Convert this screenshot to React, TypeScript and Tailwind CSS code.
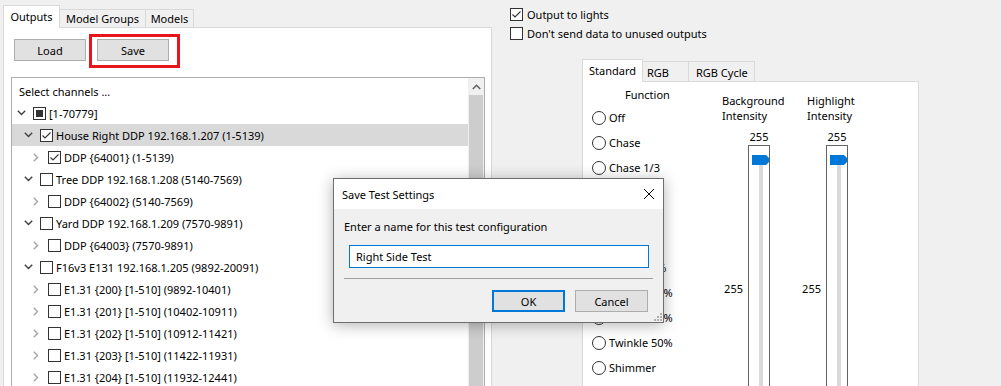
import React from "react";

type CheckState = "none" | "checked" | "partial";

interface TreeRow {
  label: string;
  level: number;
  expanded: boolean;
  state: CheckState;
  selected?: boolean;
}

const treeRows: TreeRow[] = [
  { label: "[1-70779]", level: 0, expanded: true, state: "partial" },
  { label: "House Right DDP 192.168.1.207 (1-5139)", level: 1, expanded: true, state: "checked", selected: true },
  { label: "DDP {64001} (1-5139)", level: 2, expanded: false, state: "checked" },
  { label: "Tree DDP 192.168.1.208 (5140-7569)", level: 1, expanded: true, state: "none" },
  { label: "DDP {64002} (5140-7569)", level: 2, expanded: false, state: "none" },
  { label: "Yard DDP 192.168.1.209 (7570-9891)", level: 1, expanded: true, state: "none" },
  { label: "DDP {64003} (7570-9891)", level: 2, expanded: false, state: "none" },
  { label: "F16v3 E131 192.168.1.205 (9892-20091)", level: 1, expanded: true, state: "none" },
  { label: "E1.31 {200} [1-510] (9892-10401)", level: 2, expanded: false, state: "none" },
  { label: "E1.31 {201} [1-510] (10402-10911)", level: 2, expanded: false, state: "none" },
  { label: "E1.31 {202} [1-510] (10912-11421)", level: 2, expanded: false, state: "none" },
  { label: "E1.31 {203} [1-510] (11422-11931)", level: 2, expanded: false, state: "none" },
  { label: "E1.31 {204} [1-510] (11932-12441)", level: 2, expanded: false, state: "none" },
];

const functions = [
  "Off",
  "Chase",
  "Chase 1/3",
  "Chase 1/4",
  "Chase 1/5",
  "Alternate",
  "Twinkle 5%",
  "Twinkle 10%",
  "Twinkle 25%",
  "Twinkle 50%",
  "Shimmer",
];

const indents = ["pl-[1px]", "pl-[8px]", "pl-[16px]"];

function CheckBox({ state }: { state: CheckState }) {
  return (
    <div className="w-[13px] h-[13px] shrink-0 border border-[#333333] bg-white flex items-center justify-center">
      {state === "checked" && (
        <svg width="11" height="11" viewBox="0 0 11 11">
          <polyline points="1.5,5.5 4,8 9.5,2.5" fill="none" stroke="#333333" strokeWidth="1.1" />
        </svg>
      )}
      {state === "partial" && <div className="w-[7px] h-[7px] bg-[#333333]" />}
    </div>
  );
}

function Chevron({ expanded }: { expanded: boolean }) {
  return (
    <div className="w-[16px] h-full shrink-0 flex items-center justify-center">
      {expanded ? (
        <svg width="9" height="6" viewBox="0 0 9 6">
          <polyline points="0.8,0.8 4.5,4.5 8.2,0.8" fill="none" stroke="#404040" strokeWidth="1.4" />
        </svg>
      ) : (
        <svg width="6" height="9" viewBox="0 0 6 9">
          <polyline points="0.8,0.8 4.5,4.5 0.8,8.2" fill="none" stroke="#a6a6a6" strokeWidth="1.4" />
        </svg>
      )}
    </div>
  );
}

function Radio({ label }: { label: string }) {
  return (
    <div className="h-[25px] shrink-0 flex items-center gap-[3px]">
      <div className="w-[14px] h-[14px] rounded-full border border-[#333333] bg-white" />
      <span>{label}</span>
    </div>
  );
}

function Slider() {
  return (
    <div className="flex">
      <div className="w-[26px] flex justify-end pr-[5px] pt-[150px] whitespace-nowrap h-fit">255</div>
      <div className="w-[22px] flex flex-col items-center">
        <div className="h-[14px] leading-[14px] -mt-[1px] mb-[1px]">255</div>
        <div className="relative w-[22px] h-[260px] shrink-0 border border-[#646464] bg-white">
          <div className="ml-[10px] mt-[10px] w-[4px] h-full bg-[#dadada]" />
          <svg className="absolute left-[3px] top-[9px]" width="17" height="10" viewBox="0 0 17 10">
            <path d="M0 0 H14 L17 3 V7 L14 10 H0 Z" fill="#0078d7" />
          </svg>
        </div>
      </div>
    </div>
  );
}

export default function App() {
  return (
    <div className="relative w-[1001px] h-[386px] overflow-hidden bg-[#f0f0f0] text-[11px] leading-[15px] text-black font-['Noto_Sans',sans-serif] flex">
      {/* Left: outputs tree */}
      <div className="w-[492px] shrink-0 pl-[3px] flex flex-col">
        <div className="flex items-end pt-[5px] relative z-10 shrink-0">
          <div className="w-[57px] h-[23px] -mb-px bg-white border border-b-0 border-[#d9d9d9] flex justify-center pt-[3px]">
            Outputs
          </div>
          <div className="w-[86px] h-[18px] border border-b-0 border-l-0 border-[#d9d9d9] flex justify-center pt-[1px]">
            Model Groups
          </div>
          <div className="w-[48px] h-[18px] border border-b-0 border-l-0 border-[#d9d9d9] flex justify-center pt-[1px]">
            Models
          </div>
        </div>
        <div className="relative flex-1 w-[489px] bg-white border border-[#d9d9d9] pl-[7px] pr-[6px] pt-[11px] flex flex-col">
          <div className="flex gap-[11px] ml-[3px] shrink-0">
            <button className="w-[72px] h-[22px] bg-[#e1e1e1] border border-[#adadad] flex items-center justify-center">
              Load
            </button>
            <button className="w-[72px] h-[22px] bg-[#e1e1e1] border border-[#adadad] flex items-center justify-center">
              Save
            </button>
          </div>
          {/* annotation box */}
          <div className="absolute left-[85px] top-[6px] w-[91px] h-[34px] border-[3px] border-[#e8151c]" />

          <div className="mt-[16px] flex-1 border border-[#adadad] flex overflow-hidden">
            <div className="flex-1 flex flex-col pt-[2px]">
              <div className="h-[22px] shrink-0 flex items-center pl-[7px]">Select channels ...</div>
              {treeRows.map((r, i) => (
                <div
                  key={i}
                  className={`h-[22px] flex items-center shrink-0 ${indents[r.level]} ${r.selected ? "bg-[#d9d9d9]" : ""}`}
                >
                  <Chevron expanded={r.expanded} />
                  <div className="ml-[4px]">
                    <CheckBox state={r.state} />
                  </div>
                  <span className="ml-[3px] whitespace-nowrap">{r.label}</span>
                </div>
              ))}
            </div>
            <div className="w-[16px] shrink-0 bg-[#f0f0f0] flex flex-col">
              <div className="h-[17px] shrink-0 flex items-center justify-center">
                <svg width="9" height="6" viewBox="0 0 9 6">
                  <polyline points="0.8,5 4.5,1.3 8.2,5" fill="none" stroke="#606060" strokeWidth="1.6" />
                </svg>
              </div>
              <div className="flex-1 bg-[#cdcdcd] mx-[1px]" />
            </div>
          </div>
        </div>
      </div>

      {/* Right: test options */}
      <div className="flex-1 flex flex-col pt-[5px]">
        <div className="ml-[18px] h-[19px] shrink-0 flex items-center gap-[4px]">
          <CheckBox state="checked" />
          <span>Output to lights</span>
        </div>
        <div className="ml-[18px] h-[19px] shrink-0 flex items-center gap-[4px]">
          <CheckBox state="none" />
          <span>Don't send data to unused outputs</span>
        </div>

        <div className="ml-[90px] mt-[16px] shrink-0 flex items-end relative z-10">
          <div className="w-[61px] h-[23px] -mb-px bg-white border border-b-0 border-[#d9d9d9] pl-[6px] pt-[3px]">
            Standard
          </div>
          <div className="w-[46px] h-[20px] border border-b-0 border-l-0 border-[#d9d9d9] pl-[4px] pt-[3px]">
            RGB
          </div>
          <div className="w-[66px] h-[20px] border border-b-0 border-l-0 border-[#d9d9d9] pl-[7px] pt-[3px]">
            RGB Cycle
          </div>
        </div>
        <div className="ml-[90px] w-[337px] h-[320px] shrink-0 bg-white border border-[#d9d9d9] pl-[9px] flex">
          <div className="w-[130px] shrink-0 pt-[5px] flex flex-col">
            <div className="pl-[33px] h-[15px] shrink-0">Function</div>
            <div className="mt-[3px] flex flex-col">
              {functions.map((f) => (
                <Radio key={f} label={f} />
              ))}
            </div>
          </div>
          <div className="w-[78px] shrink-0 pt-[11px] flex flex-col">
            <div className="h-[30px] shrink-0">
              Background
              <br />
              Intensity
            </div>
            <div className="mt-[8px]">
              <Slider />
            </div>
          </div>
          <div className="w-[78px] shrink-0 pt-[11px] flex flex-col">
            <div className="h-[30px] shrink-0 pl-[7px]">
              Highlight
              <br />
              Intensity
            </div>
            <div className="mt-[8px]">
              <Slider />
            </div>
          </div>
        </div>
      </div>

      {/* Save Test Settings dialog */}
      <div className="absolute left-[333px] top-[178px] w-[331px] h-[145px] border border-[#6e6e6e] bg-[#f0f0f0] shadow-[0_2px_14px_rgba(0,0,0,0.3)] flex flex-col">
        <div className="h-[30px] shrink-0 bg-white flex items-center justify-between pl-[8px] pr-[8px]">
          <span>Save Test Settings</span>
          <svg width="12" height="12" viewBox="0 0 12 12">
            <path d="M1 1 L11 11 M11 1 L1 11" stroke="#000" strokeWidth="1" />
          </svg>
        </div>
        <div className="flex-1 flex flex-col">
          <div className="pl-[10px] pt-[10px] h-[25px] shrink-0">Enter a name for this test configuration</div>
          <div className="ml-[15px] mt-[11px] w-[300px] h-[23px] shrink-0 bg-white border border-[#0078d7] flex items-center pl-[6px]">
            Right Side Test
          </div>
          <div className="ml-[10px] mt-[10px] w-[309px] h-px shrink-0 bg-[#a0a0a0]" />
          <div className="flex-1 flex items-end justify-end pr-[1px] pb-[1px]">
            <div className="flex gap-[10px] mb-[9px]">
              <button className="w-[73px] h-[22px] bg-[#e1e1e1] border-2 border-[#0078d7] flex items-center justify-center">
                OK
              </button>
              <button className="w-[73px] h-[22px] bg-[#e1e1e1] border border-[#adadad] flex items-center justify-center">
                Cancel
              </button>
            </div>
            <svg className="ml-[6px]" width="8" height="8" viewBox="0 0 8 8">
              <rect x="6" y="0" width="2" height="2" fill="#b0b0b0" />
              <rect x="3" y="3" width="2" height="2" fill="#b0b0b0" />
              <rect x="6" y="3" width="2" height="2" fill="#b0b0b0" />
              <rect x="0" y="6" width="2" height="2" fill="#b0b0b0" />
              <rect x="3" y="6" width="2" height="2" fill="#b0b0b0" />
              <rect x="6" y="6" width="2" height="2" fill="#b0b0b0" />
            </svg>
          </div>
        </div>
      </div>
    </div>
  );
}
